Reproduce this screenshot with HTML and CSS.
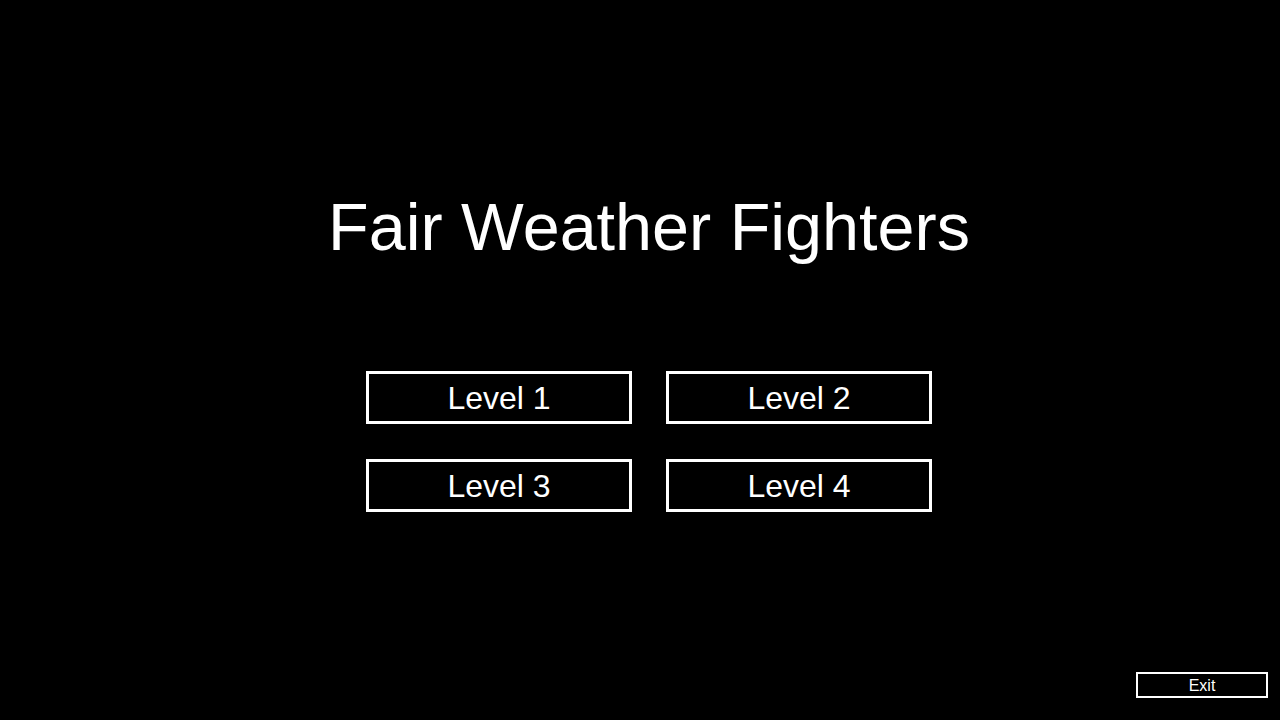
FILE: index.html
```html
<!DOCTYPE html>
<html>
<head>
<meta charset="utf-8">
<title>Fair Weather Fighters</title>
<link rel="stylesheet" href="styles.css">
</head>
<body>
<main class="screen">
  <h1 class="title">Fair Weather Fighters</h1>
  <div class="levels">
    <button class="level-btn">Level 1</button>
    <button class="level-btn">Level 2</button>
    <button class="level-btn">Level 3</button>
    <button class="level-btn">Level 4</button>
  </div>
  <button class="exit-btn">Exit</button>
</main>
</body>
</html>
```
FILE: styles.css
```css
html, body {
  margin: 0;
  padding: 0;
  background: #000;
}
body {
  font-family: "Liberation Sans", Arial, sans-serif;
  color: #fff;
}
.screen {
  box-sizing: border-box;
  width: 1280px;
  height: 720px;
  display: flex;
  flex-direction: column;
  align-items: center;
  padding: 194px 0 22px 18px;
}
.title {
  margin: 0;
  font-size: 66.5px;
  font-weight: 400;
  line-height: 66px;
  white-space: nowrap;
}
.levels {
  margin-top: 111px;
  display: grid;
  grid-template-columns: 266px 266px;
  column-gap: 34px;
  row-gap: 35px;
}
.level-btn {
  box-sizing: border-box;
  width: 266px;
  height: 53px;
  margin: 0;
  padding: 1px 0 0 0;
  background: #000;
  color: #fff;
  border: 3px solid #fff;
  font-family: "Liberation Sans", Arial, sans-serif;
  font-size: 32px;
  line-height: 46px;
  text-align: center;
}
.exit-btn {
  box-sizing: border-box;
  margin: auto 12px 0 0;
  align-self: flex-end;
  width: 132px;
  height: 26px;
  padding: 1px 0 0 0;
  background: #000;
  color: #fff;
  border: 2px solid #fff;
  font-family: "Liberation Sans", Arial, sans-serif;
  font-size: 16px;
  line-height: 21px;
  text-align: center;
}
```
